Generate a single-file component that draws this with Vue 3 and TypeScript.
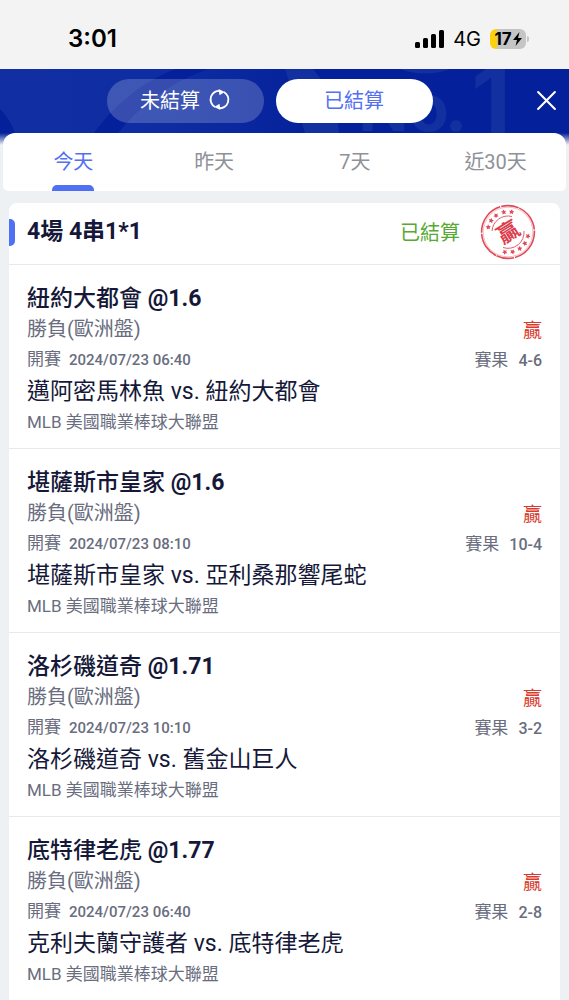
<script setup lang="ts">
import { ref } from 'vue'

interface Leg {
  pick: string
  odds: string
  start: string
  match: string
  score: string
}

const days: string[] = ['今天', '昨天', '7天', '近30天']
const activeDay = ref<number>(0)
const settled = ref<boolean>(true)

const legs: Leg[] = [
  { pick: '紐約大都會', odds: '@1.6', start: '2024/07/23 06:40', match: '邁阿密馬林魚 vs. 紐約大都會', score: '4-6' },
  { pick: '堪薩斯市皇家', odds: '@1.6', start: '2024/07/23 08:10', match: '堪薩斯市皇家 vs. 亞利桑那響尾蛇', score: '10-4' },
  { pick: '洛杉磯道奇', odds: '@1.71', start: '2024/07/23 10:10', match: '洛杉磯道奇 vs. 舊金山巨人', score: '3-2' },
  { pick: '底特律老虎', odds: '@1.77', start: '2024/07/23 06:40', match: '克利夫蘭守護者 vs. 底特律老虎', score: '2-8' },
]

const starAngles: number[] = [-76, -56, -36, -12, 10, 102, 124, 145, 167, 189]
</script>

<template>
  <div class="app">
    <div class="status">
      <span class="clock">3:01</span>
      <div class="indicators">
        <svg class="signal" viewBox="0 0 29 18" aria-hidden="true">
          <rect x="0" y="12" width="5" height="6" rx="1.5" />
          <rect x="8" y="8" width="5" height="10" rx="1.5" />
          <rect x="16" y="4" width="5" height="14" rx="1.5" />
          <rect x="24" y="0" width="5" height="18" rx="1.5" />
        </svg>
        <span class="network">4G</span>
        <div class="battery">
          <span>17</span>
          <svg viewBox="0 0 9 14" aria-hidden="true"><path d="M6.500 0 0 8h4L2.500 14 9 6H5z" /></svg>
        </div>
        <i class="battery-tip"></i>
      </div>
    </div>

    <header class="header">
      <svg class="watermark" viewBox="0 0 569 64" preserveAspectRatio="xMidYMin slice" aria-hidden="true">
        <path d="M176 0h32C170 14 142 35 118 64H94C116 34 144 12 176 0z" fill="#04209a" />
        <path d="M0 40c7 7 12 15 15 24H0z" fill="#04209a" />
        <path d="M285 0h28c14 16 24 38 26 64h-34z" fill="#12309f" />
        <path d="M400 0h50c-16 6-34 6-50 0z" fill="#12309f" />
        <text class="mark" x="449" y="62" text-anchor="end" font-size="66">No</text>
        <circle class="mark" cx="456" cy="57" r="6" />
        <text class="mark" x="511" y="64" text-anchor="end" font-size="92">1</text>
      </svg>
      <button class="pill" :class="{ on: !settled }" type="button" @click="settled = false">
        未結算
        <svg class="refresh" viewBox="0 0 22 22" aria-hidden="true">
          <path d="M6.500 18.900A9 9 0 0 1 12.500 2.100M15.500 3.100A9 9 0 0 1 9.500 19.900" fill="none" stroke="currentColor" stroke-width="1.900" />
          <path d="M10 0l6.500 3.200-5.500 3.300zM12 22l-6.500-3.200 5.500-3.300z" fill="currentColor" />
        </svg>
      </button>
      <button class="pill" :class="{ on: settled }" type="button" @click="settled = true">已結算</button>
      <button class="close" type="button" aria-label="關閉">
        <svg viewBox="0 0 20 20" aria-hidden="true"><path d="M2 2l16 16M18 2 2 18" /></svg>
      </button>
    </header>

    <div class="tab-wrap">
      <nav class="tabs">
        <button
          v-for="(day, i) in days"
          :key="day"
          class="tab"
          :class="{ active: i === activeDay }"
          type="button"
          @click="activeDay = i"
        >{{ day }}</button>
      </nav>
    </div>

    <main class="card">
      <div class="summary">
        <h1>4場 4串1*1</h1>
        <span class="state">已結算</span>
        <svg class="stamp" viewBox="0 0 56 56" aria-hidden="true">
          <circle cx="28" cy="28" r="26.400" fill="none" stroke="#e04a58" stroke-width="1.600" stroke-dasharray="34 1 18 .6 27 1" />
          <circle cx="28" cy="28" r="24.800" fill="none" stroke="#ef949d" stroke-width=".6" />
          <path d="M12 27A16 16 0 0 1 32 12.500M44 27A16 16 0 0 1 23 43.500" fill="none" stroke="#e04a58" stroke-width=".9" />
          <path
            v-for="a in starAngles"
            :key="a"
            :transform="`rotate(${a} 28 28) translate(28 7.500)`"
            d="M0-2.600.9-.9 2.600-.7 1.300.6 1.700 2.400 0 1.500-1.700 2.400-1.300.6-2.600-.7-.9-.9z"
            fill="#e04a58"
          />
          <text x="28" y="36" text-anchor="middle" font-size="22" font-weight="700" fill="#dc3c4c" transform="rotate(-32 28 28)">贏</text>
        </svg>
      </div>

      <article v-for="leg in legs" :key="leg.pick" class="leg">
        <div class="info">
          <h2>{{ leg.pick }} <b>{{ leg.odds }}</b></h2>
          <p class="market">勝負(歐洲盤)</p>
          <p class="time">開賽<span class="num">{{ leg.start }}</span></p>
          <p class="match">{{ leg.match }}</p>
          <p class="league">MLB 美國職業棒球大聯盟</p>
        </div>
        <div class="result">
          <span class="won">贏</span>
          <p class="time">賽果<span class="num score">{{ leg.score }}</span></p>
        </div>
      </article>
    </main>
  </div>
</template>

<style>
body {
  margin: 0;
  background: #edf1f4;
}
</style>

<style scoped>
.app {
  font-family: Roboto, "Noto Sans CJK TC", sans-serif;
  color: #151838;
  height: 100vh;
  overflow: hidden;
  background: #edf1f4;
}
button {
  font: inherit;
  border: 0;
  padding: 0;
  cursor: pointer;
}
h1, h2, p {
  margin: 0;
}
.status {
  display: flex;
  justify-content: space-between;
  align-items: center;
  height: 69px;
  padding: 8px 40px 0 68px;
  box-sizing: border-box;
  background: #f3f3f3;
  color: #000;
  font-family: Inter, sans-serif;
}
.clock {
  font-size: 24px;
  font-weight: 600;
}
.indicators {
  display: flex;
  align-items: center;
}
.signal {
  width: 29px;
  height: 18px;
}
.network {
  margin: 0 9px;
  font-size: 20px;
}
.battery {
  display: flex;
  align-items: center;
  justify-content: center;
  gap: 1px;
  width: 36px;
  height: 20px;
  border-radius: 6px;
  background: linear-gradient(90deg, #fbd00c 7px, #c5c5c5 7px);
  font-size: 17px;
  font-weight: 700;
}
.battery svg {
  width: 9px;
  height: 14px;
}
.battery-tip {
  width: 2px;
  height: 6px;
  margin-left: 1px;
  border-radius: 0 2px 2px 0;
  background: #c5c5c5;
}
.header {
  position: relative;
  display: flex;
  justify-content: center;
  align-items: center;
  gap: 12px;
  height: 64px;
  padding: 0 30px 0 0;
  background: linear-gradient(90deg, #112fa3 0%, #0f2da2 30%, #04219b 55%, #04219b 100%);
}
.watermark {
  position: absolute;
  inset: 0;
  width: 100%;
  height: 100%;
}
.mark {
  fill: #12309f;
  font-family: Inter, sans-serif;
  font-weight: 700;
}
.pill {
  position: relative;
  display: flex;
  justify-content: center;
  align-items: center;
  gap: 9px;
  width: 157px;
  height: 44px;
  padding-bottom: 3px;
  border-radius: 22px;
  font-size: 20px;
  color: #fff;
  background: rgba(255, 255, 255, 0.2);
}
.pill.on {
  color: #5270f0;
  background: #fff;
}
.refresh {
  width: 21px;
  height: 21px;
}
.close {
  position: absolute;
  right: 12px;
  top: 21px;
  width: 21px;
  height: 21px;
  background: none;
}
.close svg {
  display: block;
  width: 21px;
  height: 21px;
  fill: none;
  stroke: #fff;
  stroke-width: 2;
  stroke-linecap: round;
}
.tab-wrap {
  position: relative;
  padding: 0 3px;
  background: linear-gradient(#04219b, #edf1f4 12px);
}
.tabs {
  display: flex;
  height: 58px;
  border-radius: 12px 12px 5px 5px;
  background: #fff;
}
.tab {
  position: relative;
  flex: 1;
  padding-bottom: 3px;
  background: none;
  color: #8e9197;
  font-size: 20px;
}
.tab.active {
  color: #5270f0;
}
.tab.active::after {
  content: "";
  position: absolute;
  left: 50%;
  bottom: 0;
  width: 42px;
  height: 6px;
  margin-left: -21px;
  border-radius: 5px 5px 0 0;
  background: #4f70f5;
}
.card {
  margin: 12px 9px 0;
  border-radius: 8px 8px 0 0;
  background: #fff;
}
.summary {
  position: relative;
  display: flex;
  align-items: center;
  height: 61px;
  padding: 0 24px 4px 18px;
  box-sizing: border-box;
}
.summary::before {
  content: "";
  position: absolute;
  left: 0;
  top: 16px;
  width: 6px;
  height: 27px;
  border-radius: 0 5px 5px 0;
  background: #4f70f5;
}
h1 {
  flex: 1;
  font-size: 23px;
  line-height: 32px;
  font-weight: 700;
}
.state {
  margin-right: 20px;
  font-size: 20px;
  color: #57a934;
}
.stamp {
  width: 56px;
  height: 56px;
}
.leg {
  display: flex;
  justify-content: space-between;
  height: 184px;
  padding: 18px 18px 0;
  box-sizing: border-box;
  border-top: 1px solid #e6e9ed;
}
h2 {
  font-size: 23px;
  line-height: 31px;
  font-weight: 500;
}
h2 b {
  font-weight: 700;
}
.market {
  font-size: 20px;
  line-height: 30px;
  color: #696d7e;
}
.time {
  font-size: 17px;
  line-height: 31px;
  color: #696d7e;
}
.num {
  margin-left: 8px;
  font-size: 15px;
  font-weight: 500;
}
.match {
  font-size: 23px;
  line-height: 32px;
}
.league {
  font-size: 17px;
  line-height: 28px;
  color: #696d7e;
}
.result {
  padding-top: 34px;
  text-align: right;
}
.won {
  display: block;
  font-size: 19px;
  line-height: 28px;
  color: #d93a2e;
}
.score {
  margin-left: 10px;
  font-size: 16px;
}
</style>
